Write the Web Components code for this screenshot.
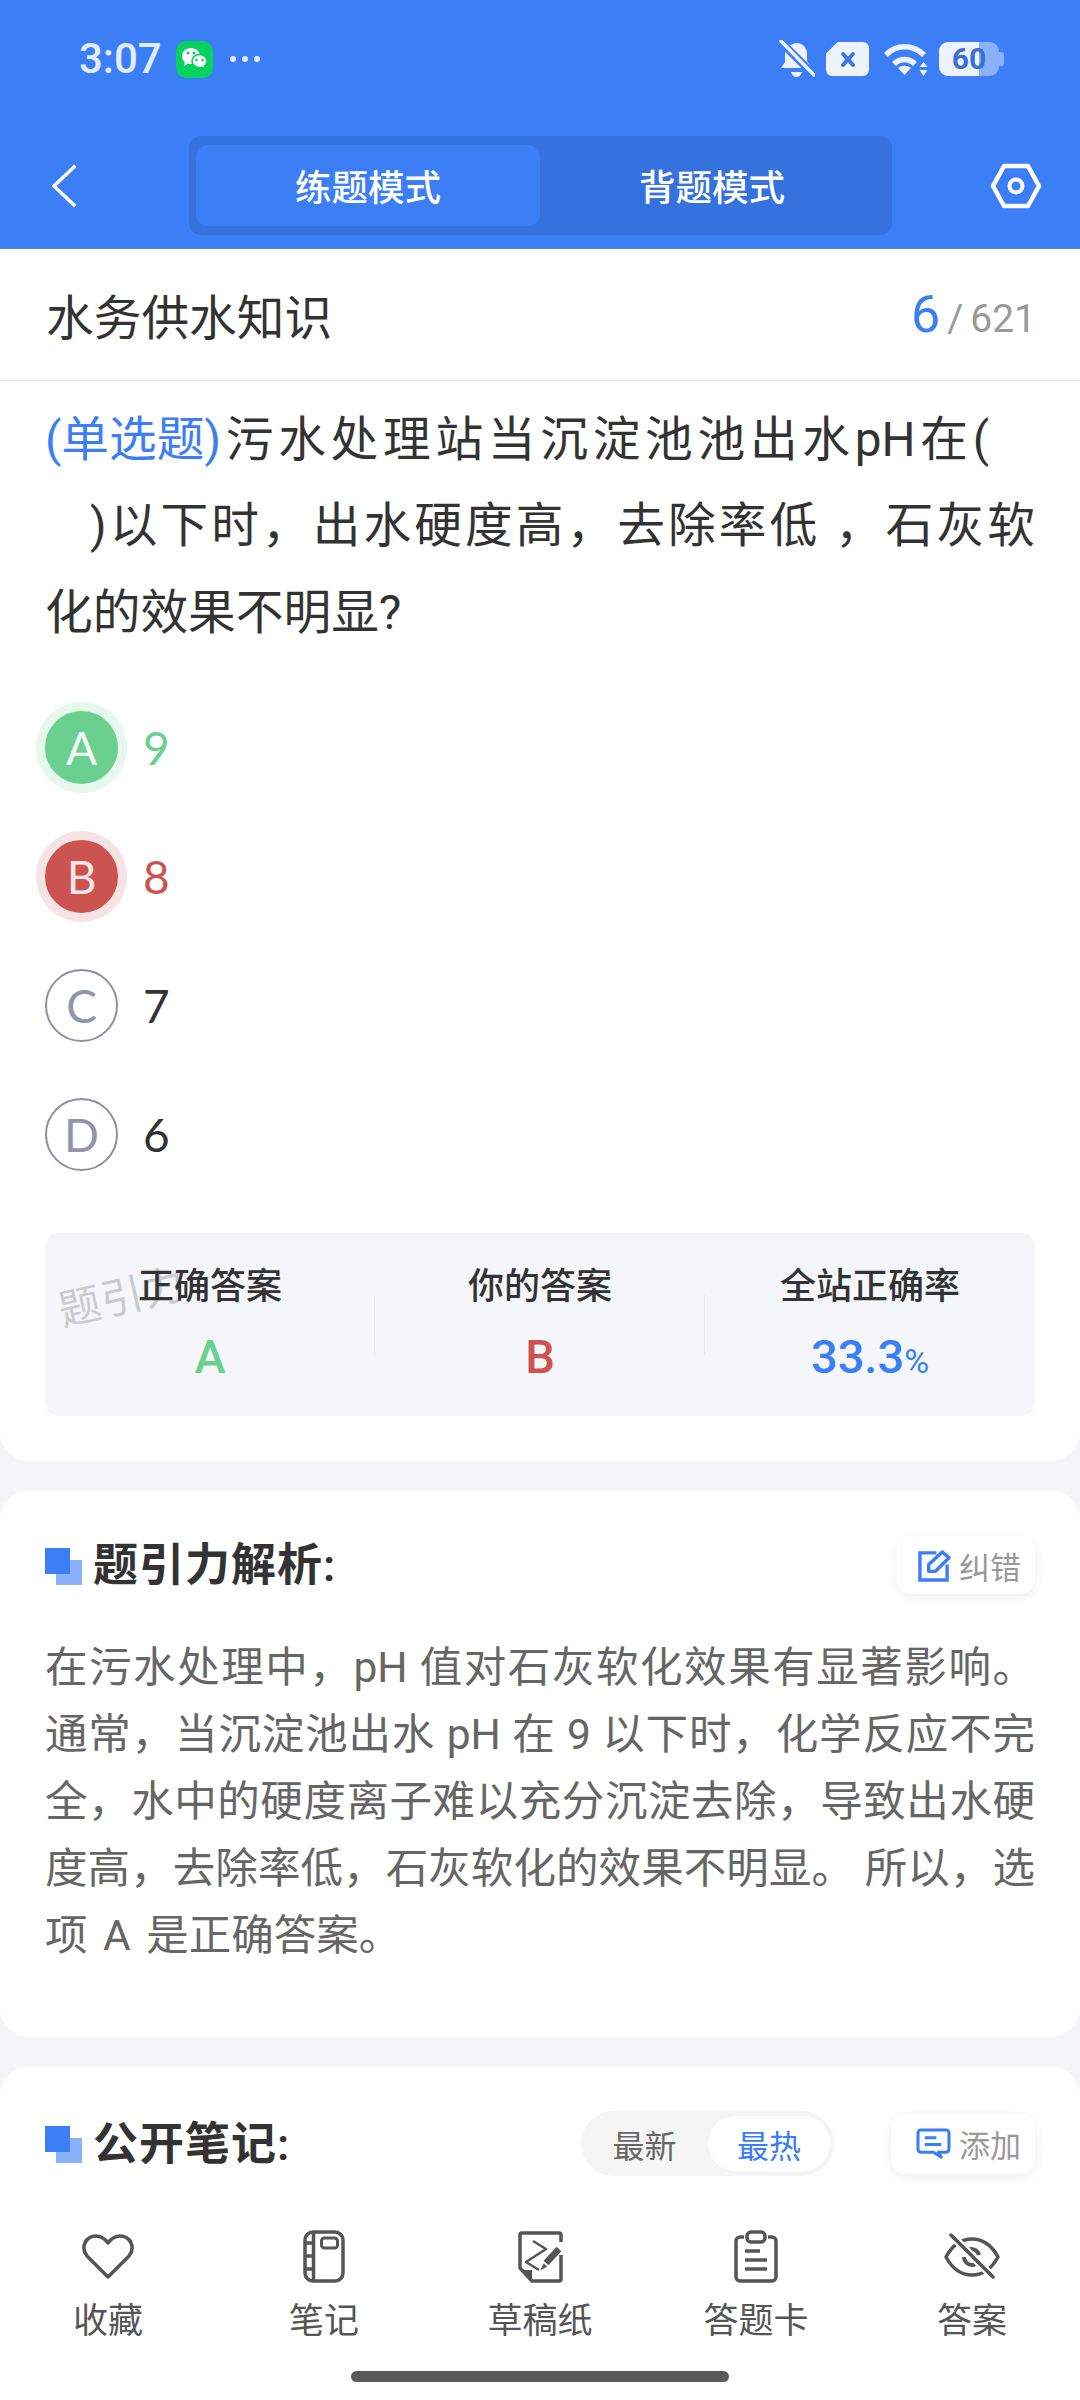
<!DOCTYPE html>
<html lang="zh-CN">
<head>
<meta charset="utf-8">
<title>练题模式</title>
<style>
    html, body{
        margin: 0;
        padding: 0;
        width: 1080px;
        height: 2400px;
        overflow: hidden;
    }
    body{
        display: flex;
        flex-direction: column;
        background-color: #f4f6f9;
        color: #333;
        font-family: Roboto, "Noto Sans CJK SC", sans-serif;
    }
    .scroll{
        flex: 1;
        min-height: 0;
        overflow: hidden;
        display: flex;
        flex-direction: column;
        gap: 29px;
    }
    .opts{
        display: block;
        margin-top: 27px;
    }
</style>
<script>
class statusBar extends HTMLElement{
    constructor(){
        super();
        this.attachShadow({mode:"open"});
    }
    connectedCallback(){
        this.shadowRoot.innerHTML = `
        <style>
            :host{
                display: flex;
                align-items: center;
                height: 118px;
                padding: 0 76px 0 79px;
                color: #e3ecfd;
            }
            .time{
                font: 500 42px/1 Roboto, sans-serif;
                width: 97px;
            }
            .dots{
                display: flex;
                gap: 6px;
                margin-left: 17px;
            }
            .dots i{
                width: 6px;
                height: 6px;
                border-radius: 50%;
                background-color: #e3ecfd;
            }
            .right{
                margin-left: auto;
                display: flex;
                align-items: center;
            }
            svg{
                display: block;
            }
            .battery{
                position: relative;
                width: 60px;
                height: 34px;
                margin-left: 11px;
                margin-right: 5px;
                border-radius: 9px;
                background: linear-gradient(90deg, #edf3fe 40px, #8ab2fb 40px);
                display: flex;
                align-items: center;
                justify-content: center;
                font: 700 30px/1 Roboto, sans-serif;
                color: #3a6fd8;
            }
            .battery::after{
                content: "";
                position: absolute;
                right: -5px;
                top: 10px;
                width: 5px;
                height: 14px;
                border-radius: 0 3px 3px 0;
                background-color: #8ab2fb;
            }
        </style>
        <span class="time">3:07</span>
        <svg width="37" height="37" viewBox="0 0 37 37">
            <rect width="37" height="37" rx="10" fill="#07d25f"/>
            <path d="M15 7c5 0 9 3.600 9 8s-4 8-9 8c-1 0-2-.2-3-.4L8 25l.8-4C7 19.500 6 17.400 6 15c0-4.400 4-8 9-8z" fill="#fff"/>
            <path d="M23.500 13.500c4.200 0 7.500 2.900 7.500 6.500 0 1.900-.9 3.600-2.400 4.800l.6 3.200-3.200-1.800c-.8.2-1.600.3-2.500.3-4.200 0-7.500-2.900-7.500-6.500s3.300-6.500 7.500-6.500z" fill="#fff" stroke="#07d25f" stroke-width="1.500"/>
            <circle cx="12" cy="12" r="1.500" fill="#07d25f"/>
            <circle cx="18" cy="12" r="1.500" fill="#07d25f"/>
            <circle cx="20.500" cy="19" r="1.300" fill="#07d25f"/>
            <circle cx="26.500" cy="19" r="1.300" fill="#07d25f"/>
        </svg>
        <span class="dots"><i></i><i></i><i></i></span>
        <span class="right">
            <svg width="36" height="39" viewBox="0 0 36 39">
                <path d="M18 3c6 0 10 5 10 11v7l5 7H2l4-6v-8C6 8 12 3 18 3z" fill="#edf3fe"/>
                <path d="M12 32h11c-1 3-3 5-5.500 5S13 35 12 32z" fill="#edf3fe"/>
                <path d="M2 2l33 33" stroke="#3b7ef6" stroke-width="8"/>
                <path d="M2 1l33 34" stroke="#edf3fe" stroke-width="3.500" stroke-linecap="round"/>
            </svg>
            <svg style="margin-left:11px" width="43" height="34" viewBox="0 0 43 34">
                <path d="M13 0H37a6 6 0 0 1 6 6V28a6 6 0 0 1-6 6H6a6 6 0 0 1-6-6V13a4 4 0 0 1 1.500-3L10 1.500A4 4 0 0 1 13 0z" fill="#edf3fe"/>
                <path d="M17 12l10 11M27 12L17 23" stroke="#3a74e6" stroke-width="4" stroke-linecap="round"/>
            </svg>
            <svg style="margin-left:13px" width="46" height="34" viewBox="0 0 46 34">
                <path d="M2 11C13 -1 32 -1 44 11l-4 4C30 5 15 5 6 15z" fill="#edf3fe"/>
                <path d="M10 20c7-7 18-7 25 0l-4 4c-5-5-12-5-17 0z" fill="#edf3fe"/>
                <path d="M16 26c3.500-3 9.500-3 13 0l-6.500 7z" fill="#edf3fe"/>
                <path d="M41.500 20l4 5h-8zM41.500 34l-4-6h8z" fill="#edf3fe"/>
            </svg>
            <span class="battery">60</span>
        </span>
        `;
    }
}

class navHeader extends HTMLElement{
    constructor(){
        super();
        this.attachShadow({mode:"open"});
    }
    connectedCallback(){
        this.shadowRoot.innerHTML = `
        <style>
            :host{
                display: grid;
                grid-template-columns: 189px 703px 1fr;
                align-items: center;
                height: 99px;
                margin-top: 18px;
                padding-bottom: 14px;
            }
            .back{
                display: block;
                margin-left: 50px;
            }
            .tabs{
                display: grid;
                grid-template-columns: 344px 344px;
                height: 81px;
                padding: 9px 8px 9px 7px;
                border-radius: 12px;
                background-color: #3572de;
                color: #fff;
                font-size: 36.500px;
                font-weight: 500;
            }
            .tabs span{
                display: flex;
                align-items: center;
                justify-content: center;
                border-radius: 12px;
            }
            .tabs .on{
                background-color: #3b7ef6;
            }
            .gear{
                display: block;
                margin-left: 98px;
            }
        </style>
        <svg class="back" width="28" height="44" viewBox="0 0 28 44">
            <path d="M24 3L4 22l20 19" fill="none" stroke="#fff" stroke-width="3.500" stroke-linecap="square"/>
        </svg>
        <div class="tabs"><span class="on">练题模式</span><span>背题模式</span></div>
        <svg class="gear" width="52" height="48" viewBox="0 0 52 48">
            <path d="M3 24L14 4h24l11 20-11 20H14z" fill="none" stroke="#fff" stroke-width="4.500" stroke-linejoin="round"/>
            <circle cx="26" cy="24" r="6.500" fill="none" stroke="#fff" stroke-width="4"/>
        </svg>
        `;
    }
}

class appHeader extends HTMLElement{
    constructor(){
        super();
        this.attachShadow({mode:"open"});
    }
    connectedCallback(){
        this.shadowRoot.innerHTML = `
        <style>
            :host{
                display: block;
                flex: none;
                height: 249px;
                overflow: hidden;
                background-color: #3b7ef6;
            }
        </style>
        <status-bar></status-bar>
        <nav-header></nav-header>
        `;
    }
}

class justLine extends HTMLElement{
    constructor(){
        super();
        this.attachShadow({mode:"open"});
    }
    connectedCallback(){
        this.shadowRoot.innerHTML = `
        <style>
            :host{
                display: block;
                text-align: justify;
                text-align-last: justify;
            }
            :host([last]){
                text-align-last: left;
            }
        </style>
        <slot></slot>
        `;
    }
}

class paperCard extends HTMLElement{
    constructor(){
        super();
        this.attachShadow({mode:"open"});
    }
    connectedCallback(){
        this.shadowRoot.innerHTML = `
        <style>
            :host{
                display: block;
                flex: none;
                background-color: #fff;
                border-radius: 29px;
            }
        </style>
        <slot></slot>
        `;
    }
}

class titleRow extends HTMLElement{
    constructor(){
        super();
        this.attachShadow({mode:"open"});
    }
    connectedCallback(){
        this.shadowRoot.innerHTML = `
        <style>
            :host{
                display: flex;
                align-items: center;
                justify-content: space-between;
                height: 131px;
                padding: 0 44px 0 46px;
                border-bottom: 1px solid #e5e5e5;
            }
            .name{
                font-size: 47.700px;
                color: #333;
            }
            .count{
                display: flex;
                align-items: baseline;
                color: #999;
                font: 400 39px/1 Roboto, sans-serif;
            }
            .count b{
                font-weight: 400;
                font-size: 52px;
                color: #3b7ef6;
            }
            .count i{
                font-style: normal;
                margin: 0 7px 0 7px;
            }
        </style>
        <span class="name"><slot name="name"></slot></span>
        <span class="count"><b>${this.getAttribute("current")}</b><i>/</i>${this.getAttribute("total")}</span>
        `;
    }
}

class optionItem extends HTMLElement{
    constructor(){
        super();
        this.attachShadow({mode:"open"});
    }
    connectedCallback(){
        this.shadowRoot.innerHTML = `
        <style>
            :host{
                display: flex;
                align-items: center;
                gap: 25px;
                height: 129px;
                padding-left: 45px;
                font: 400 46px/1 Lato, sans-serif;
                color: #333;
            }
            .dot{
                box-sizing: border-box;
                width: 73px;
                height: 73px;
                border-radius: 50%;
                border: 2px solid #8c90a5;
                color: #8f95aa;
                display: flex;
                align-items: center;
                justify-content: center;
            }
            :host([state="right"]){
                color: #6bd08f;
            }
            :host([state="right"]) .dot{
                background-color: #6bd08f;
                border-color: #6bd08f;
                box-shadow: 0 0 0 9px #e6f7ec;
                color: #eefaf2;
            }
            :host([state="wrong"]){
                color: #cb5350;
            }
            :host([state="wrong"]) .dot{
                background-color: #cb5350;
                border-color: #cb5350;
                box-shadow: 0 0 0 9px #f6e3e3;
                color: #f8e6e6;
            }
        </style>
        <span class="dot">${this.getAttribute("letter")}</span>
        <slot></slot>
        `;
    }
}

class statPanel extends HTMLElement{
    constructor(){
        super();
        this.attachShadow({mode:"open"});
    }
    connectedCallback(){
        this.shadowRoot.innerHTML = `
        <style>
            :host{
                display: grid;
                grid-template-columns: 330px 330px 330px;
                position: relative;
                height: 183px;
                margin: 34px 45px 45px 45px;
                border-radius: 14px;
                background-color: #f4f6f9;
            }
            .mark{
                position: absolute;
                left: 12px;
                top: 30px;
                font-size: 42px;
                letter-spacing: 1px;
                color: #c9cbce;
                transform: rotate(-13deg);
            }
        </style>
        <span class="mark">题引力</span>
        <slot></slot>
        `;
    }
}

class statCell extends HTMLElement{
    constructor(){
        super();
        this.attachShadow({mode:"open"});
    }
    connectedCallback(){
        this.shadowRoot.innerHTML = `
        <style>
            :host{
                display: flex;
                flex-direction: column;
                align-items: center;
                position: relative;
                padding-top: 29px;
            }
            :host(:not(:last-child))::after{
                content: "";
                position: absolute;
                right: 0;
                top: 62px;
                width: 1px;
                height: 60px;
                background-color: #e8eaed;
            }
            .label{
                height: 50px;
                font-size: 36px;
                line-height: 50px;
                font-weight: 500;
                color: #333;
            }
            .value{
                margin-top: 22px;
                height: 46px;
                font: 500 47px/46px Roboto, sans-serif;
            }
            :host([tone="green"]) .value{ color: #6bd08f; }
            :host([tone="red"]) .value{ color: #cb5350; }
            :host([tone="blue"]) .value{ color: #3b7ef6; }
            ::slotted(small){
                font-size: 34px;
                font-weight: 400;
            }
        </style>
        <span class="label">${this.getAttribute("label")}</span>
        <span class="value"><slot></slot></span>
        `;
    }
}

class sectionHead extends HTMLElement{
    constructor(){
        super();
        this.attachShadow({mode:"open"});
    }
    connectedCallback(){
        this.shadowRoot.innerHTML = `
        <style>
            :host{
                display: flex;
                align-items: center;
                justify-content: space-between;
            }
            .left{
                display: flex;
                align-items: center;
                gap: 11px;
                padding-top: 2px;
                font-size: 45px;
                line-height: 48px;
                font-weight: 600;
                letter-spacing: 1px;
                color: #333;
            }
            .mark{
                position: relative;
                width: 37px;
                height: 37px;
            }
            .mark::before{
                content: "";
                position: absolute;
                right: 0;
                bottom: 0;
                width: 26px;
                height: 25px;
                background-color: #8ab2fb;
            }
            .mark::after{
                content: "";
                position: absolute;
                left: 0;
                top: 0;
                width: 25px;
                height: 26px;
                background-color: #3b7ef6;
            }
            .right{
                display: flex;
                align-items: center;
                gap: 57px;
            }
        </style>
        <span class="left"><span class="mark"></span><slot></slot></span>
        <span class="right"><slot name="actions"></slot></span>
        `;
    }
}

class chipButton extends HTMLElement{
    constructor(){
        super();
        this.attachShadow({mode:"open"});
    }
    connectedCallback(){
        this.shadowRoot.innerHTML = `
        <style>
            :host{
                display: flex;
                align-items: center;
                gap: 8px;
                height: 58px;
                padding: 0 14px 0 21px;
                border-radius: 14px;
                background-color: #fff;
                box-shadow: 0 3px 12px rgba(0, 0, 0, .07);
                font-size: 31px;
                color: #999;
            }
            ::slotted(svg){
                display: block;
            }
        </style>
        <slot name="icon"></slot>
        <slot></slot>
        `;
    }
}

class sortToggle extends HTMLElement{
    constructor(){
        super();
        this.attachShadow({mode:"open"});
    }
    connectedCallback(){
        this.shadowRoot.innerHTML = `
        <style>
            :host{
                display: grid;
                grid-template-columns: 127px 122px;
                box-sizing: border-box;
                width: 253px;
                height: 65px;
                padding: 5px 4px 5px 0;
                border-radius: 33px;
                background-color: #f5f5f5;
                font-size: 32px;
                color: #666;
            }
            span{
                display: flex;
                align-items: center;
                justify-content: center;
                border-radius: 28px;
            }
            .on{
                background-color: #fff;
                color: #3b7ef6;
            }
        </style>
        <span>最新</span><span class="on">最热</span>
        `;
    }
}

class bottomBar extends HTMLElement{
    constructor(){
        super();
        this.attachShadow({mode:"open"});
    }
    connectedCallback(){
        this.shadowRoot.innerHTML = `
        <style>
            :host{
                display: block;
                flex: none;
                box-sizing: border-box;
                height: 210px;
                padding-top: 39px;
                background-color: #fff;
            }
            .row{
                display: grid;
                grid-template-columns: repeat(5, 1fr);
            }
            .pill{
                width: 378px;
                height: 11px;
                margin: 24px auto 0 auto;
                border-radius: 6px;
                background-color: #5a5a5a;
            }
        </style>
        <div class="row"><slot></slot></div>
        <div class="pill"></div>
        `;
    }
}

class toolItem extends HTMLElement{
    constructor(){
        super();
        this.attachShadow({mode:"open"});
    }
    connectedCallback(){
        this.shadowRoot.innerHTML = `
        <style>
            :host{
                display: flex;
                flex-direction: column;
                align-items: center;
                font-size: 35px;
                line-height: 50px;
                color: #555;
            }
            .icon{
                display: flex;
                align-items: center;
                justify-content: center;
                height: 54px;
                margin-bottom: 14px;
            }
        </style>
        <span class="icon"><slot name="icon"></slot></span>
        <slot></slot>
        `;
    }
}

customElements.define("status-bar", statusBar);
customElements.define("nav-header", navHeader);
customElements.define("app-header", appHeader);
customElements.define("just-line", justLine);
customElements.define("paper-card", paperCard);
customElements.define("title-row", titleRow);
customElements.define("option-item", optionItem);
customElements.define("stat-panel", statPanel);
customElements.define("stat-cell", statCell);
customElements.define("section-head", sectionHead);
customElements.define("chip-button", chipButton);
customElements.define("sort-toggle", sortToggle);
customElements.define("bottom-bar", bottomBar);
customElements.define("tool-item", toolItem);
</script>
</head>
<body>
<app-header></app-header>

<div class="scroll">
    <paper-card style="border-radius:0 0 29px 29px">
        <title-row current="6" total="621"><span slot="name">水务供水知识</span></title-row>
        <div style="padding:16px 45px 0 45px;font-size:47.700px;line-height:86.400px;color:#333">
            <just-line style="padding-right:46px"><span style="display:inline-block;color:#3b7ef6">(单选题)</span>污水处理站当沉淀池池出水pH在(</just-line>
            <just-line style="padding-left:45px">)以下时，出水硬度高，去除率低 ，石灰软</just-line>
            <just-line last>化的效果不明显?</just-line>
        </div>
        <div class="opts">
            <option-item letter="A" state="right">9</option-item>
            <option-item letter="B" state="wrong">8</option-item>
            <option-item letter="C">7</option-item>
            <option-item letter="D">6</option-item>
        </div>
        <stat-panel>
            <stat-cell label="正确答案" tone="green">A</stat-cell>
            <stat-cell label="你的答案" tone="red">B</stat-cell>
            <stat-cell label="全站正确率" tone="blue">33.3<small>%</small></stat-cell>
        </stat-panel>
    </paper-card>

    <paper-card>
        <div style="padding:46px 45px 68px 45px">
            <section-head>
                题引力解析:
                <chip-button slot="actions">
                    <svg slot="icon" width="33" height="33" viewBox="0 0 34 34">
                        <path d="M19 4H2v28h28V16" fill="none" stroke="#3b7ef6" stroke-width="3.500"/>
                        <path d="M11 23v-7L25 3l7 6-14 14z" fill="none" stroke="#3b7ef6" stroke-width="3.500" stroke-linejoin="round"/>
                    </svg>
                    纠错
                </chip-button>
            </section-head>
            <div style="margin-top:40px;font-size:42.500px;line-height:67px;color:#666">
                <just-line>在污水处理中，pH 值对石灰软化效果有显著影响。</just-line>
                <just-line>通常，当沉淀池出水 pH 在 9 以下时，化学反应不完</just-line>
                <just-line>全，水中的硬度离子难以充分沉淀去除，导致出水硬</just-line>
                <just-line>度高，去除率低，石灰软化的效果不明显。 所以，选</just-line>
                <just-line last style="word-spacing:5px">项 A 是正确答案。</just-line>
            </div>
        </div>
    </paper-card>

    <paper-card style="flex:1;border-radius:29px 29px 0 0">
        <div style="padding:45px 45px 0 45px">
            <section-head>
                公开笔记:
                <sort-toggle slot="actions"></sort-toggle>
                <chip-button slot="actions" style="height:60px;padding-left:24px">
                    <svg slot="icon" width="36" height="31" viewBox="0 0 37 32">
                        <path d="M6 2h26a3 3 0 0 1 3 3v17a3 3 0 0 1-3 3h-8l3 5-8-5H6a3 3 0 0 1-3-3V5a3 3 0 0 1 3-3z" fill="none" stroke="#3b7ef6" stroke-width="3.200" stroke-linejoin="round"/>
                        <path d="M10 10h12M10 17h17" stroke="#3b7ef6" stroke-width="3.200"/>
                    </svg>
                    添加
                </chip-button>
            </section-head>
        </div>
    </paper-card>
</div>

<bottom-bar>
    <tool-item>
        <svg slot="icon" width="54" height="47" viewBox="0 0 54 47">
            <path d="M27 44L6 23C-1 14 5 3 15 3c5 0 9 3 12 7 3-4 7-7 12-7 10 0 16 11 9 20z" fill="none" stroke="#555" stroke-width="3.500" stroke-linejoin="round"/>
        </svg>
        收藏
    </tool-item>
    <tool-item>
        <svg slot="icon" width="42" height="53" viewBox="0 0 42 53">
            <rect x="2" y="2" width="38" height="49" rx="8" fill="none" stroke="#555" stroke-width="3.500"/>
            <path d="M10.500 2v49M2 13h8M2 26h8M2 39h8" fill="none" stroke="#555" stroke-width="3.500"/>
            <rect x="18.500" y="8" width="16" height="10" rx="3" fill="none" stroke="#555" stroke-width="3"/>
        </svg>
        笔记
    </tool-item>
    <tool-item>
        <svg slot="icon" width="46" height="53" viewBox="0 0 46 53">
            <path d="M44 12V5a2 2 0 0 0-2-2H5a2 2 0 0 0-2 2v33l12 13h27a2 2 0 0 0 2-2V25" fill="none" stroke="#555" stroke-width="3.500" stroke-linejoin="round"/>
            <path d="M3 40h12v11z" fill="#555"/>
            <path d="M16 11l13 8-20 13 13 8" fill="none" stroke="#555" stroke-width="2.500" stroke-linejoin="round"/>
            <path d="M42 19L29 33" stroke="#555" stroke-width="6.500"/>
            <path d="M27 35l-1.500 3 3-1.500z" fill="#555" stroke="#555" stroke-width="2"/>
        </svg>
        草稿纸
    </tool-item>
    <tool-item>
        <svg slot="icon" width="46" height="53" viewBox="0 0 46 53">
            <path d="M11 7H7a4 4 0 0 0-4 4v36a4 4 0 0 0 4 4h32a4 4 0 0 0 4-4V11a4 4 0 0 0-4-4h-4" fill="none" stroke="#555" stroke-width="3.500"/>
            <rect x="14" y="2" width="18" height="10" rx="4" fill="none" stroke="#555" stroke-width="3.500"/>
            <path d="M12 21h15M12 30h22M12 39h22" stroke="#555" stroke-width="3.500"/>
        </svg>
        答题卡
    </tool-item>
    <tool-item>
        <svg slot="icon" width="58" height="47" viewBox="0 0 58 47">
            <path d="M3 24C10 11 19 6 29 6c10 0 19 5 26 18-7 13-16 18-26 18-10 0-19-5-26-18z" fill="none" stroke="#555" stroke-width="3.500" stroke-linejoin="round"/>
            <path d="M21 24a8 8 0 0 0 8 8 8 8 0 0 0 6-3M23 18a8 8 0 0 1 13 4" fill="none" stroke="#555" stroke-width="4"/>
            <path d="M8 2l42 42" stroke="#fff" stroke-width="8"/>
            <path d="M8 2l42 42" stroke="#555" stroke-width="3.500" stroke-linecap="round"/>
        </svg>
        答案
    </tool-item>
</bottom-bar>
</body>
</html>
